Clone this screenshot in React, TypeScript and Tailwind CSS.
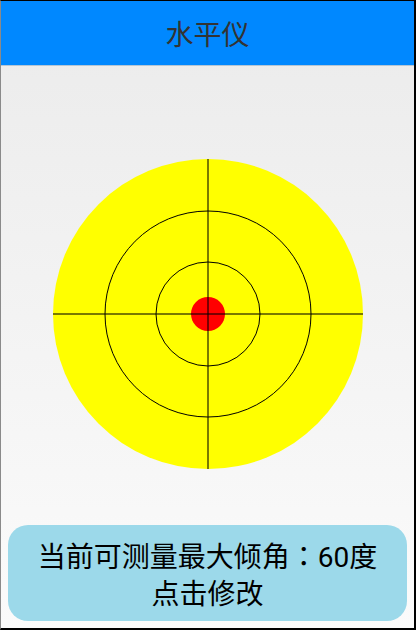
const font = { fontFamily: '"Noto Sans CJK SC", "Noto Sans", sans-serif' };

const Level = () => {
  const c = 156;
  return (
    <svg width={312} height={312} viewBox="0 0 312 312">
      <circle cx={c} cy={c} r={155} fill="#ffff00" />
      <circle cx={c} cy={c} r={103} fill="none" stroke="#000" strokeWidth={1} />
      <circle cx={c} cy={c} r={52} fill="none" stroke="#000" strokeWidth={1} />
      <circle cx={c} cy={c} r={17} fill="#ff0000" />
      <line x1={c} y1={1} x2={c} y2={311} stroke="#000" strokeOpacity={0.7} strokeWidth={1.5} />
      <line x1={1} y1={c} x2={311} y2={c} stroke="#000" strokeOpacity={0.7} strokeWidth={1.5} />
    </svg>
  );
};

export default function App() {
  return (
    <div
      className="w-[416px] h-[630px] flex flex-col border-t border-t-black border-l border-l-[#8a8a8a] border-r-2 border-r-black border-b-2 border-b-black bg-gradient-to-b from-[#ebebeb] to-[#fbfbfb]"
      style={font}
    >
      <div className="h-[64px] shrink-0 bg-[#0088ff] flex items-center justify-center text-[28px] text-[#333333]">
        水平仪
      </div>
      <div className="h-px bg-[#b4c6d6]" />
      <div className="flex justify-center pt-[92px]">
        <Level />
      </div>
      <div className="flex-1" />
      <div className="mx-[7px] mb-[7px] h-[96px] rounded-[20px] bg-[#9cd9ea] flex flex-col items-center justify-center text-[28px] leading-[34px] text-black">
        <span>
          当前可测量最大倾角
          <span style={{ fontFamily: '"Noto Sans CJK TC", sans-serif' }}>：</span>
          <span style={{ fontFamily: 'Roboto, sans-serif' }}>60</span>度
        </span>
        <span>点击修改</span>
      </div>
    </div>
  );
}
